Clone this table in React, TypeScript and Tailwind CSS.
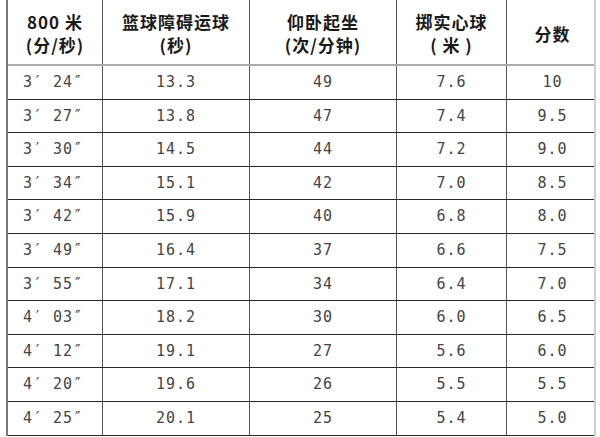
const rows = [
  ["3′ 24″", "13.3", "49", "7.6", "10"],
  ["3′ 27″", "13.8", "47", "7.4", "9.5"],
  ["3′ 30″", "14.5", "44", "7.2", "9.0"],
  ["3′ 34″", "15.1", "42", "7.0", "8.5"],
  ["3′ 42″", "15.9", "40", "6.8", "8.0"],
  ["3′ 49″", "16.4", "37", "6.6", "7.5"],
  ["3′ 55″", "17.1", "34", "6.4", "7.0"],
  ["4′ 03″", "18.2", "30", "6.0", "6.5"],
  ["4′ 12″", "19.1", "27", "5.6", "6.0"],
  ["4′ 20″", "19.6", "26", "5.5", "5.5"],
  ["4′ 25″", "20.1", "25", "5.4", "5.0"],
];

const headers = [
  ["800 米", "(分/秒)"],
  ["篮球障碍运球", "(秒)"],
  ["仰卧起坐", "(次/分钟)"],
  ["掷实心球", "( 米 )"],
  ["分数"],
];

const cols = "grid grid-cols-[95px_147px_147px_110px_91px]";

export default function App() {
  return (
    <div className="w-[600px] h-[437px] bg-white overflow-hidden">
      <div className="ml-[6px] w-[590px] border-l-2 border-l-[#777] border-r-2 border-r-[#cfcfcf]">
        {/* header */}
        <div className={`${cols} h-[66px] border-b-2 border-b-[#aaaaaa]`}>
          {headers.map((h, i) => (
            <div
              key={i}
              className={`flex flex-col items-center justify-center pt-[2px] text-[17px] leading-[23px] tracking-[1px] font-bold text-[#1a1a1a] ${
                i < 4 ? "border-r-[1.5px] border-r-[#555]" : ""
              }`}
              style={{ fontFamily: '"Noto Sans CJK SC", "Noto Sans", sans-serif' }}
            >
              {h.map((line, j) => (
                <span key={j} className="whitespace-pre">{line}</span>
              ))}
            </div>
          ))}
        </div>
        {/* body */}
        {rows.map((r, ri) => (
          <div key={ri} className={`${cols} h-[33.6px] border-b border-b-[#2a2a2a]`}>
            {r.map((v, ci) => (
              <div
                key={ci}
                className={`flex items-center text-[15px] tracking-[1px] text-[#444] whitespace-pre ${
                  ci === 0 ? "pl-[15px]" : "justify-center"
                } ${ci < 4 ? "border-r-[1.5px] border-r-[#555]" : ""}`}
                style={{ fontFamily: '"DejaVu Sans Mono", "Liberation Mono", monospace' }}
              >
                {v}
              </div>
            ))}
          </div>
        ))}
      </div>
    </div>
  );
}
